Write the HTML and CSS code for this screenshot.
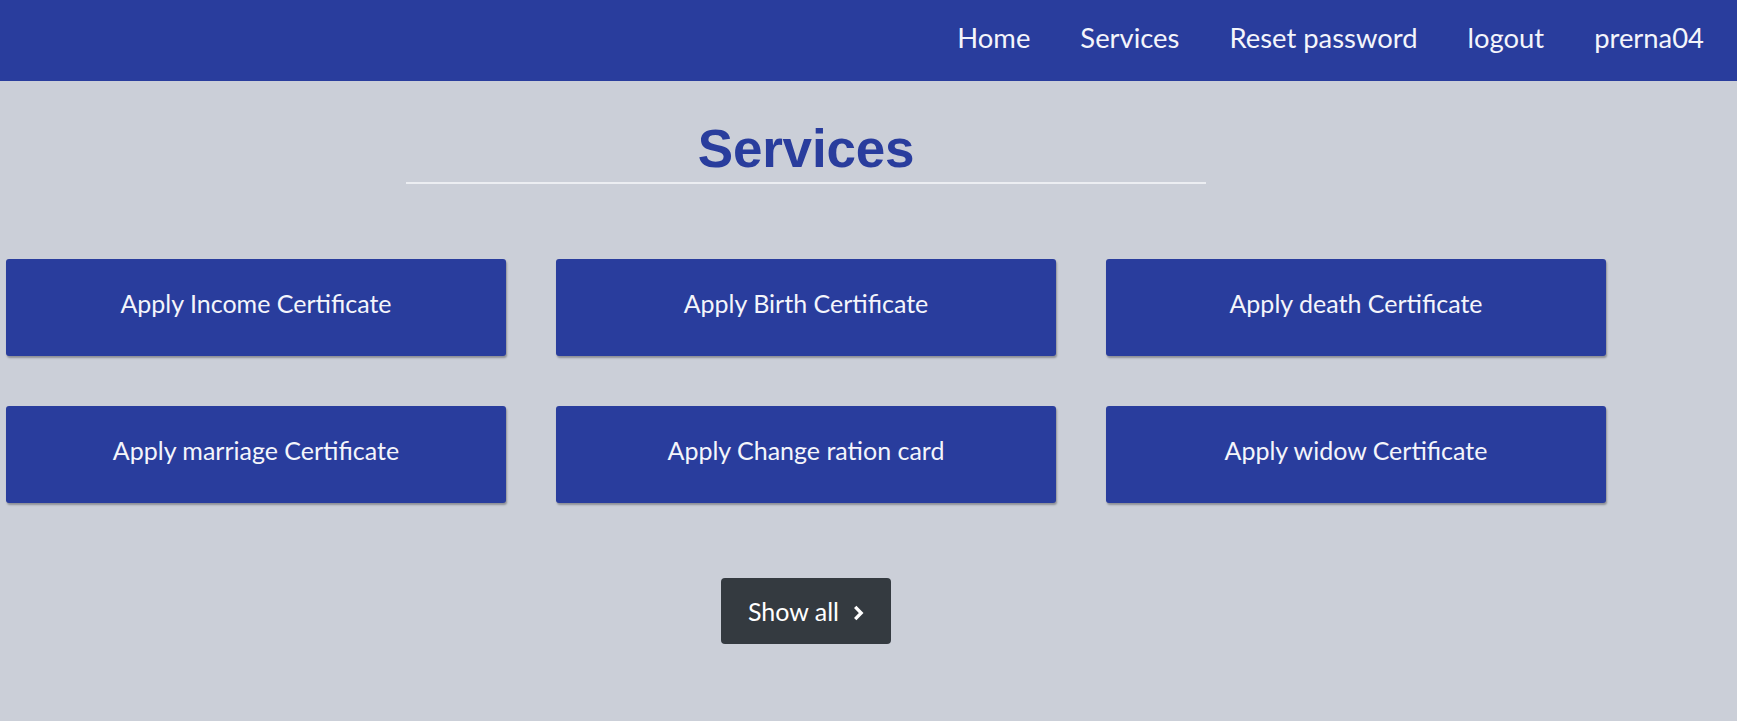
FILE: index.html
```html
<!DOCTYPE html>
<html lang="en">
<head>
<meta charset="utf-8">
<title>Services</title>
<link rel="stylesheet" href="styles.css">
</head>
<body>
<nav class="navbar">
  <ul class="nav-links">
    <li><a href="#">Home</a></li>
    <li><a href="#">Services</a></li>
    <li><a href="#">Reset password</a></li>
    <li><a href="#">logout</a></li>
    <li><a href="#">prerna04</a></li>
  </ul>
</nav>
<main class="content">
  <h1 class="title">Services</h1>
  <hr class="rule">
  <div class="service-grid">
    <a class="service-card" href="#">Apply Income Certificate</a>
    <a class="service-card" href="#">Apply Birth Certificate</a>
    <a class="service-card" href="#">Apply death Certificate</a>
    <a class="service-card" href="#">Apply marriage Certificate</a>
    <a class="service-card" href="#">Apply Change ration card</a>
    <a class="service-card" href="#">Apply widow Certificate</a>
  </div>
  <div class="actions">
    <a class="show-all" href="#">Show all
      <svg class="chevron" width="11" height="16" viewBox="0 0 11 16" aria-hidden="true"><polyline points="2.2,1.8 8.2,8 2.2,14.2" fill="none" stroke="#ffffff" stroke-width="3.3" stroke-linecap="butt" stroke-linejoin="miter"/></svg>
    </a>
  </div>
</main>
</body>
</html>
```

FILE: styles.css
```css
body {
  margin: 0;
  background: #cbcfd8;
  font-family: Lato, "Open Sans", sans-serif;
}

.navbar {
  height: 81px;
  box-sizing: border-box;
  background: #293d9d;
  display: flex;
  justify-content: flex-end;
  align-items: center;
  padding: 0 33px 4px 0;
}

.nav-links {
  display: flex;
  gap: 50px;
  list-style: none;
  margin: 0;
  padding: 0;
}

.nav-links a {
  color: #f4f5fb;
  text-decoration: none;
  font-size: 27.4px;
  line-height: 1.2;
}

.content {
  width: 1612px;
  box-sizing: border-box;
  padding: 0 6px;
  display: flex;
  flex-direction: column;
  align-items: center;
}

.title {
  margin: 38px 0 0;
  font-family: "Liberation Sans", Arial, sans-serif;
  font-weight: 700;
  font-size: 53px;
  line-height: 60px;
  letter-spacing: -0.2px;
  color: #293d9d;
}

.rule {
  width: 800px;
  height: 2px;
  border: 0;
  background: #eceef2;
  margin: 3px 0 0;
}

.service-grid {
  margin-top: 75px;
  align-self: stretch;
  display: grid;
  grid-template-columns: repeat(3, 500px);
  gap: 50px;
}

.service-card {
  height: 97px;
  box-sizing: border-box;
  padding-bottom: 9px;
  display: flex;
  align-items: center;
  justify-content: center;
  background: #293d9d;
  border-radius: 3px;
  box-shadow: 1px 2px 2px rgba(0, 0, 0, 0.3);
  color: #f4f5fb;
  text-decoration: none;
  font-size: 25px;
  line-height: 1.2;
}

.actions {
  margin-top: 75px;
}

.show-all {
  display: inline-flex;
  align-items: center;
  gap: 14px;
  height: 66px;
  box-sizing: border-box;
  padding: 0 27px;
  background: #343a40;
  border-radius: 4px;
  color: #ffffff;
  text-decoration: none;
  font-size: 25px;
  line-height: 1.2;
}

.chevron {
  display: block;
  margin-top: 3px;
}
```
